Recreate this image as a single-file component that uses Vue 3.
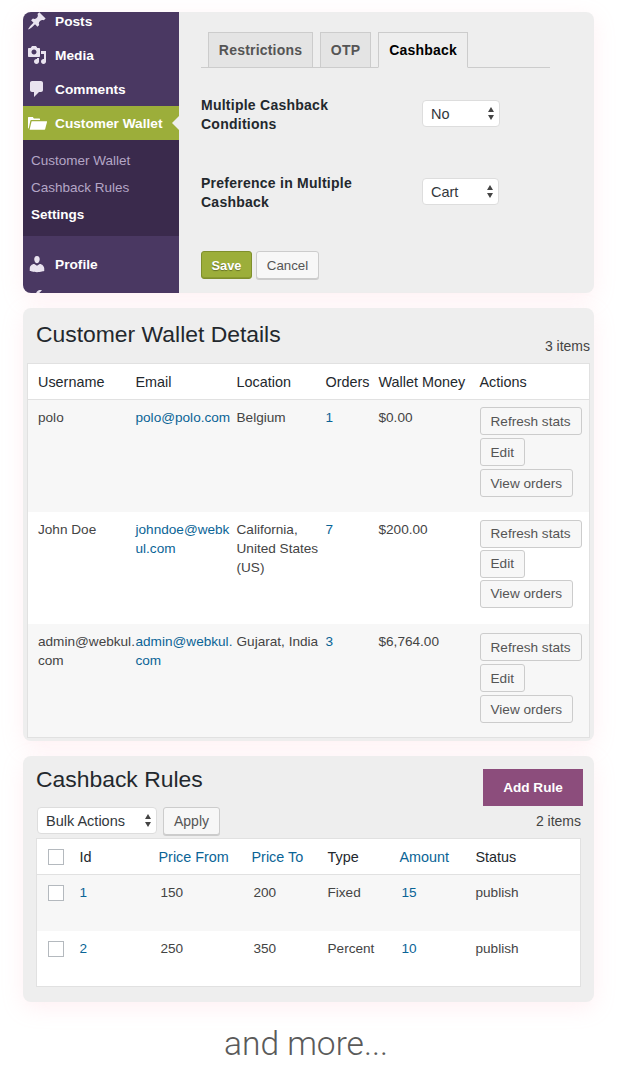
<script setup>
const menuTop = [
  { label: 'Posts', d: 'M10.44 3.02l1.82-1.82 6.36 6.35-1.83 1.82c-1.05-.68-2.48-.57-3.41.36l-.75.75c-.92.93-1.04 2.35-.35 3.41l-1.83 1.82-2.41-2.41-2.8 2.79c-.42.42-3.38 2.71-3.8 2.29s1.86-3.39 2.28-3.81l2.79-2.79L4.1 9.36l1.83-1.82c1.05.69 2.48.57 3.4-.36l.75-.75c.93-.92 1.05-2.35.36-3.41z' },
  { label: 'Media', d: 'M13 11V4c0-.55-.45-1-1-1h-1.67L9 1H5L3.67 3H2c-.55 0-1 .45-1 1v7c0 .55.45 1 1 1h10c.55 0 1-.45 1-1zM7 4.5c1.38 0 2.5 1.12 2.5 2.5S8.38 9.5 7 9.5 4.5 8.38 4.5 7 5.62 4.5 7 4.5zM14 6h5v10.5c0 1.38-1.12 2.5-2.5 2.5S14 17.88 14 16.5s1.12-2.5 2.5-2.5c.17 0 .34.02.5.05V9h-3V6zm-4 8.05V13h2v3.5c0 1.38-1.12 2.5-2.5 2.5S7 17.88 7 16.5 8.12 14 9.5 14c.17 0 .34.02.5.05z' },
  { label: 'Comments', d: 'M5 2h9c1.1 0 2 .9 2 2v7c0 1.1-.9 2-2 2h-2l-5 5v-5H5c-1.1 0-2-.9-2-2V4c0-1.1.9-2 2-2z' }
]
const menuBottom = [
  { label: 'Profile', d: 'M10 9.25c-2.27 0-2.73-3.44-2.73-3.44C7 4.02 7.82 2 9.97 2c2.16 0 2.98 2.02 2.71 3.81 0 0-.41 3.44-2.68 3.44zm0 2.57L12.72 10c2.39 0 4.52 2.33 4.52 4.53v2.49s-3.65 1.13-7.24 1.13c-3.65 0-7.24-1.13-7.24-1.13v-2.49c0-2.25 1.94-4.48 4.47-4.48z' },
  { label: 'Tools', d: 'M16.68 9.77c-1.34 1.34-3.3 1.67-4.95.99l-5.41 6.52c-.99.99-2.59.99-3.58 0s-.99-2.59 0-3.58l6.52-5.42c-.68-1.65-.35-3.61.99-4.95 1.28-1.28 3.12-1.62 4.72-1.06l-2.89 2.89 2.82 2.82 2.86-2.87c.53 1.58.18 3.39-1.08 4.66z' }
]
const customers = [
  { user: 'polo', email: 'polo@polo.com', loc: 'Belgium', orders: '1', money: '$0.00', h: 112, top: 7, gap: 3 },
  { user: 'John Doe', email: 'johndoe@webk\nul.com', loc: 'California,\nUnited States\n(US)', orders: '7', money: '$200.00', h: 112, top: 8, gap: 2 },
  { user: 'admin@webkul.\ncom', email: 'admin@webkul.\ncom', loc: 'Gujarat, India', orders: '3', money: '$6,764.00', h: 113, top: 9, gap: 3 }
]
const rules = [
  { id: '1', from: '150', to: '200', type: 'Fixed', amount: '15', status: 'publish' },
  { id: '2', from: '250', to: '350', type: 'Percent', amount: '10', status: 'publish' }
]
</script>

<template>
  <div class="page">
    <section class="card settings">
      <aside class="side">
        <a v-for="m in menuTop" :key="m.label" class="mi">
          <svg class="ic" viewBox="0 0 20 20"><path :d="m.d" /></svg>{{ m.label }}
        </a>
        <a class="mi active">
          <svg class="ic" viewBox="0 0 20 20">
            <path d="M1 6V4.6c0-.4.3-.6.6-.6h4.2l1.1 1.4h5.5c.3 0 .6.3.6.6v.9H4.3c-.5 0-.8.2-.9.7L1.700 15.500 1 15.300z" />
            <path d="M4.600 8.300H19.600c.3 0 .5.200.4.600L18.100 16.200c-.1.300-.3.500-.6.500H2.600z" />
          </svg>Customer Wallet
          <i class="notch"></i>
        </a>
        <div class="sub">
          <a>Customer Wallet</a>
          <a>Cashback Rules</a>
          <a class="cur">Settings</a>
        </div>
        <a v-for="m in menuBottom" :key="m.label" class="mi">
          <svg class="ic" viewBox="0 0 20 20"><path :d="m.d" /></svg>{{ m.label }}
        </a>
      </aside>
      <div class="form">
        <div class="tabs">
          <span class="tab t1">Restrictions</span>
          <span class="tab t2">OTP</span>
          <span class="tab t3 on">Cashback</span>
        </div>
        <div class="field f1">
          <label>Multiple Cashback<br />Conditions</label>
          <span class="sel w78">
            <select><option>No</option></select>
            <i class="arrows"></i>
          </span>
        </div>
        <div class="field f2">
          <label>Preference in Multiple<br />Cashback</label>
          <span class="sel w77">
            <select><option>Cart</option></select>
            <i class="arrows"></i>
          </span>
        </div>
        <div class="btns">
          <button class="save">Save</button>
          <button class="cancel">Cancel</button>
        </div>
      </div>
    </section>

    <section class="card wallet">
      <div class="wallet-head">
        <h2>Customer Wallet Details</h2>
        <span class="count">3 items</span>
      </div>
      <table class="tbl t-wallet">
        <colgroup>
          <col style="width:108px" /><col style="width:101px" /><col style="width:89px" />
          <col style="width:53px" /><col style="width:101px" /><col />
        </colgroup>
        <thead>
          <tr><th>Username</th><th>Email</th><th>Location</th><th>Orders</th><th>Wallet Money</th><th>Actions</th></tr>
        </thead>
        <tbody>
          <tr v-for="c in customers" :key="c.user" :style="{ height: c.h + 'px' }">
            <td class="pre">{{ c.user }}</td>
            <td class="pre link">{{ c.email }}</td>
            <td class="pre">{{ c.loc }}</td>
            <td class="link">{{ c.orders }}</td>
            <td>{{ c.money }}</td>
            <td class="acts" :style="{ paddingTop: c.top + 'px' }">
              <div class="stack" :style="{ gap: c.gap + 'px' }">
                <button class="act">Refresh stats</button>
                <button class="act">Edit</button>
                <button class="act">View orders</button>
              </div>
            </td>
          </tr>
        </tbody>
      </table>
    </section>

    <section class="card rules">
      <div class="rules-head">
        <h2>Cashback Rules</h2>
        <button class="add">Add Rule</button>
      </div>
      <div class="rules-bar">
        <span class="sel w120">
          <select><option>Bulk Actions</option></select>
          <i class="arrows"></i>
        </span>
        <button class="apply">Apply</button>
        <span class="count2">2 items</span>
      </div>
      <table class="tbl t-rules">
        <colgroup>
          <col style="width:43px" /><col style="width:79px" /><col style="width:93px" />
          <col style="width:76px" /><col style="width:72px" /><col style="width:76px" /><col />
        </colgroup>
        <thead>
          <tr>
            <th class="chk"><i class="box"></i></th><th>Id</th>
            <th class="link">Price From</th><th class="link">Price To</th>
            <th>Type</th><th class="link">Amount</th><th>Status</th>
          </tr>
        </thead>
        <tbody>
          <tr v-for="r in rules" :key="r.id">
            <td class="chk"><i class="box"></i></td>
            <td class="link">{{ r.id }}</td>
            <td class="nudge">{{ r.from }}</td>
            <td class="nudge">{{ r.to }}</td>
            <td>{{ r.type }}</td>
            <td class="nudge link">{{ r.amount }}</td>
            <td>{{ r.status }}</td>
          </tr>
        </tbody>
      </table>
    </section>

    <p class="more">and more...</p>
  </div>
</template>

<style>
html, body { margin: 0; background: #fff; }
</style>

<style scoped>
.page {
  width: 617px;
  height: 1072px;
  overflow: hidden;
  box-sizing: border-box;
  padding: 12px 23px 0;
  display: flex;
  flex-direction: column;
  gap: 15px;
  font-family: "Liberation Sans", Arial, sans-serif;
  font-size: 14px;
  color: #444;
}
.card {
  width: 571px;
  box-sizing: border-box;
  flex: none;
  background: #eee;
  border-radius: 8px;
  box-shadow: 0 6px 22px rgba(255, 170, 190, .18);
}

/* settings card */
.settings { height: 281px; display: flex; overflow: hidden; }
.side { width: 156px; flex: none; background: #4a3862; margin-top: -8px; }
.mi {
  height: 34px;
  display: flex;
  align-items: center;
  position: relative;
  color: #fff;
  font-weight: 700;
  font-size: 13.700px;
  white-space: nowrap;
}
.ic { width: 20px; height: 20px; margin: 0 8px 0 4px; fill: #e9e3ef; flex: none; }
.active { background: #9cae3a; }
.active .ic { fill: #fff; }
.notch {
  position: absolute;
  right: 0;
  top: 10px;
  border: 7px solid transparent;
  border-right-color: #eee;
  border-left-width: 0;
}
.sub { background: #3a2a4c; height: 96px; box-sizing: border-box; padding-top: 7px; margin-bottom: 11px; }
.sub a { display: block; height: 27px; line-height: 27px; padding-left: 8px; font-size: 13.500px; color: #b4a6c6; }
.sub .cur { color: #fff; font-weight: 700; }

.form { flex: 1; padding: 20px 44px 0 22px; color: #23282d; }
.tabs { display: flex; gap: 7px; padding-left: 7px; height: 35px; border-bottom: 1px solid #ccc; }
.tab {
  box-sizing: border-box;
  height: 36px;
  line-height: 34px;
  text-align: center;
  border: 1px solid #ccc;
  background: #e4e4e4;
  color: #555;
  font-weight: 700;
  letter-spacing: .2px;
}
.t1 { width: 105px; }
.t2 { width: 51px; }
.t3 { width: 90px; }
.tab.on { background: #eee; color: #000; border-bottom-color: #eee; }
.field { display: flex; align-items: flex-start; }
.field label { width: 221px; flex: none; font-weight: 700; line-height: 19px; letter-spacing: .25px; }
.f1 { margin-top: 28px; }
.f2 { margin-top: 40px; }
.field .sel { margin-top: 4px; }
.sel { display: inline-block; position: relative; height: 27px; flex: none; }
.w78 { width: 78px; }
.w77 { width: 77px; }
.w120 { width: 120px; }
.sel select {
  appearance: none;
  width: 100%;
  height: 100%;
  box-sizing: border-box;
  margin: 0;
  padding: 0 0 0 8px;
  background: #fff;
  border: 1px solid #ddd;
  border-radius: 4px;
  font: 14.500px "Liberation Sans", Arial, sans-serif;
  color: #32373c;
}
.arrows {
  position: absolute;
  right: 5px;
  top: 7px;
  width: 7px;
  height: 13px;
  pointer-events: none;
}
.arrows::before, .arrows::after {
  content: "";
  position: absolute;
  left: 0;
  border-left: 3.500px solid transparent;
  border-right: 3.500px solid transparent;
}
.arrows::before { top: 0; border-bottom: 5px solid #444; }
.arrows::after { bottom: 0; border-top: 5px solid #444; }

.btns { display: flex; gap: 4px; margin-top: 39px; }
.btns button {
  box-sizing: border-box;
  height: 28px;
  border-radius: 3px;
  padding: 0;
}
.save {
  width: 51px;
  background: #9cae3a;
  border: 1px solid #7f8f2c;
  box-shadow: inset 0 -1px 0 #8a9a30;
  color: #fff;
  font: 700 12.800px "Liberation Sans", Arial, sans-serif;
  text-shadow: 0 1px 1px rgba(0, 0, 0, .35);
}
.cancel {
  width: 63px;
  background: #f7f7f7;
  border: 1px solid #ccc;
  box-shadow: 0 1px 0 #ccc;
  color: #555;
  font: 13.300px "Liberation Sans", Arial, sans-serif;
}

/* wallet card */
.wallet { height: 433px; padding: 0 4px; }
.wallet-head { height: 55px; display: flex; justify-content: space-between; }
h2 { margin: 0; font-weight: 400; font-size: 22.900px; color: #23282d; }
.wallet-head h2 { padding: 13px 0 0 9px; line-height: 27px; }
.count { align-self: flex-end; line-height: 16px; font-size: 14px; padding-bottom: 9px; color: #444; }

.tbl {
  border-collapse: collapse;
  table-layout: fixed;
  background: #fff;
  border: 1px solid #e1e1e1;
  box-sizing: border-box;
}
.tbl th { font-weight: 400; font-size: 14.400px; text-align: left; color: #23282d; border-bottom: 1px solid #e1e1e1; padding: 0; }
.tbl td { vertical-align: top; padding: 8px 0 0; font-size: 13.600px; line-height: 19px; color: #444; }
.tbl tbody tr:nth-child(odd) { background: #f7f7f7; }
.tbl .link, .tbl th.link { color: #0a6496; }
.pre { white-space: pre-line; }

.t-wallet { width: 563px; height: 375px; }
.t-wallet thead tr { height: 36px; }
.t-wallet th:first-child, .t-wallet td:first-child { padding-left: 10px; }
.stack { display: flex; flex-direction: column; align-items: flex-start; }
.act {
  box-sizing: border-box;
  height: 28px;
  padding: 0 10px;
  background: #f7f7f7;
  border: 1px solid #ccc;
  border-radius: 3px;
  font: 13.600px "Liberation Sans", Arial, sans-serif;
  color: #555;
}

/* rules card */
.rules { height: 246px; padding: 0 13px; }
.rules-head { display: flex; justify-content: space-between; height: 51px; }
.rules-head h2 { padding-top: 10px; line-height: 27px; }
.add {
  margin: 13px -2px 0 0;
  width: 100px;
  height: 37px;
  padding: 0 0 1px;
  border: 0;
  background: #8c4d7c;
  color: #fff;
  font: 700 13.600px "Liberation Sans", Arial, sans-serif;
}
.rules-bar { display: flex; align-items: flex-start; height: 31px; gap: 6px; padding-left: 1px; }
.apply {
  box-sizing: border-box;
  width: 57px;
  height: 28px;
  padding: 0;
  background: #f7f7f7;
  border: 1px solid #ccc;
  box-shadow: 0 1px 0 #ccc;
  border-radius: 3px;
  font: 14px "Liberation Sans", Arial, sans-serif;
  color: #555;
}
.count2 { margin-left: auto; line-height: 28px; font-size: 14px; color: #444; }
.t-rules { width: 545px; }
.t-rules thead tr { height: 36px; }
.t-rules tbody tr { height: 56px; }
.t-rules th.chk, .t-rules td.chk { padding-left: 11px; }
.nudge { padding-left: 2px !important; }
.box { display: block; box-sizing: border-box; width: 16px; height: 16px; background: #fff; border: 1px solid #b4b9be; }
.t-rules td .box { margin-top: 2px; }

.more {
  margin: 6px 0 0;
  padding-right: 5px;
  text-align: center;
  font-family: Roboto, sans-serif;
  font-weight: 300;
  font-size: 33.500px;
  line-height: 42px;
  color: #5a5a5a;
}
</style>
